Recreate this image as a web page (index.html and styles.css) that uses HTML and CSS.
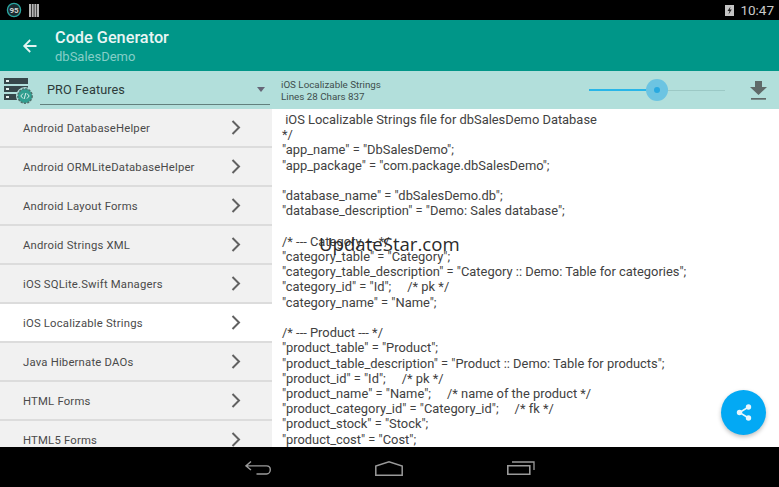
FILE: index.html
```html
<!DOCTYPE html>
<html lang="en">
<head>
<meta charset="utf-8">
<title>Code Generator</title>
<link rel="stylesheet" href="styles.css">
</head>
<body>
<div class="screen">
  <header class="status">
    <div class="status-left">
      <svg class="ic-badge" width="16" height="16" viewBox="0 0 16 16"><circle cx="8" cy="8" r="6.6" fill="#1b2b30" stroke="#2aa5a0" stroke-width="1.3"/><text x="8" y="11" text-anchor="middle" class="badge-text">95</text></svg>
      <svg width="10" height="13" viewBox="0 0 10 13"><path d="M0 0h2v13H0zM2.700 0h2v13h-2zM5.400 0h2v13h-2zM8 0h2v13H8z" fill="#b5b5b5"/></svg>
    </div>
    <div class="status-right">
      <svg width="9" height="12" viewBox="0 0 9 12"><path d="M0 1h9v11H0z" fill="#c4c4c4"/><path d="M5.500 2.500 2.500 7h2L3.500 10.500 6.800 5.600H4.800z" fill="#222"/></svg>
      <span class="clock">10:47</span>
    </div>
  </header>
  <div class="appbar">
    <svg class="back" width="16" height="16" viewBox="0 0 16 16"><path d="M14.500 8H2.500M8.200 2 2.200 8l6 6" fill="none" stroke="#e4f3f1" stroke-width="1.800"/></svg>
    <div class="titles">
      <div class="title">Code Generator</div>
      <div class="subtitle">dbSalesDemo</div>
    </div>
  </div>
  <div class="toolbar">
    <div class="tool-left">
      <svg class="db-icon" width="29" height="27" viewBox="0 0 29 27">
        <path d="M0 0h24v6H0zM0 8h24v6H0zM0 16h24v6H0z" fill="#37474a"/>
        <path d="M2 2h3v2H2zM2 10h3v2H2zM2 18h3v2H2z" fill="#e6f2f0"/>
        <circle cx="21" cy="18" r="9" fill="#b2dfdb"/>
        <circle cx="21" cy="18" r="7.200" fill="#2f9e8f" stroke="#50706c" stroke-width="1.400" stroke-dasharray="2.200 1.200"/>
        <path d="M19 15.500 16.800 18l2.200 2.500M23 15.500l2.200 2.500-2.200 2.500M21.800 15l-1.600 6" fill="none" stroke="#eaf6f4" stroke-width=".9"/>
      </svg>
      <div class="select">
        <span>PRO Features</span>
        <i class="caret"></i>
      </div>
    </div>
    <div class="tool-right">
      <div class="info">
        <div>iOS Localizable Strings</div>
        <div>Lines 28 Chars 837</div>
      </div>
      <div class="slider">
        <div class="slider-fill"></div>
        <div class="slider-rest"></div>
        <div class="slider-halo"><i class="slider-dot"></i></div>
      </div>
      <svg class="download" width="17" height="19" viewBox="0 0 17 19"><path d="M5 0h7v6h5l-8.500 8L0 6h5z" fill="#5f6a69"/><path d="M1 17h15v1.700H1z" fill="#5f6a69"/></svg>
    </div>
  </div>
  <main class="body">
    <nav class="list">
      <div class="row"><span>Android DatabaseHelper</span><svg class="chev" width="10" height="15" viewBox="0 0 10 15"><path d="M1.500 1 8 7.500 1.500 14" fill="none" stroke="#616161" stroke-width="2"/></svg></div>
      <div class="row"><span>Android ORMLiteDatabaseHelper</span><svg class="chev" width="10" height="15" viewBox="0 0 10 15"><path d="M1.500 1 8 7.500 1.500 14" fill="none" stroke="#616161" stroke-width="2"/></svg></div>
      <div class="row"><span>Android Layout Forms</span><svg class="chev" width="10" height="15" viewBox="0 0 10 15"><path d="M1.500 1 8 7.500 1.500 14" fill="none" stroke="#616161" stroke-width="2"/></svg></div>
      <div class="row"><span>Android Strings XML</span><svg class="chev" width="10" height="15" viewBox="0 0 10 15"><path d="M1.500 1 8 7.500 1.500 14" fill="none" stroke="#616161" stroke-width="2"/></svg></div>
      <div class="row"><span>iOS SQLite.Swift Managers</span><svg class="chev" width="10" height="15" viewBox="0 0 10 15"><path d="M1.500 1 8 7.500 1.500 14" fill="none" stroke="#616161" stroke-width="2"/></svg></div>
      <div class="row active"><span>iOS Localizable Strings</span><svg class="chev" width="10" height="15" viewBox="0 0 10 15"><path d="M1.500 1 8 7.500 1.500 14" fill="none" stroke="#616161" stroke-width="2"/></svg></div>
      <div class="row"><span>Java Hibernate DAOs</span><svg class="chev" width="10" height="15" viewBox="0 0 10 15"><path d="M1.500 1 8 7.500 1.500 14" fill="none" stroke="#616161" stroke-width="2"/></svg></div>
      <div class="row"><span>HTML Forms</span><svg class="chev" width="10" height="15" viewBox="0 0 10 15"><path d="M1.500 1 8 7.500 1.500 14" fill="none" stroke="#616161" stroke-width="2"/></svg></div>
      <div class="row"><span>HTML5 Forms</span><svg class="chev" width="10" height="15" viewBox="0 0 10 15"><path d="M1.500 1 8 7.500 1.500 14" fill="none" stroke="#616161" stroke-width="2"/></svg></div>
    </nav>
    <pre class="code"> iOS Localizable Strings file for dbSalesDemo Database
*/
"app_name" = "DbSalesDemo";
"app_package" = "com.package.dbSalesDemo";

"database_name" = "dbSalesDemo.db";
"database_description" = "Demo: Sales database";

/* --- Category --- */
"category_table" = "Category";
"category_table_description" = "Category :: Demo: Table for categories";
"category_id" = "Id";     /* pk */
"category_name" = "Name";

/* --- Product --- */
"product_table" = "Product";
"product_table_description" = "Product :: Demo: Table for products";
"product_id" = "Id";     /* pk */
"product_name" = "Name";     /* name of the product */
"product_category_id" = "Category_id";     /* fk */
"product_stock" = "Stock";
"product_cost" = "Cost";</pre>
  </main>
  <footer class="navbar">
    <svg width="26" height="14" viewBox="0 0 26 14"><path d="M6 .5.900 4.900 6 9M.900 4.900H21.500C24 4.900 25.300 6.700 25.300 8.700 25.300 10.900 23.800 13 21.500 13H11.500" fill="none" stroke="#9a9a9a" stroke-width="1.400"/></svg>
    <svg width="28" height="15" viewBox="0 0 28 15"><path d="M.800 14.200V5L14 .800 27.200 5v9.200z" fill="none" stroke="#9a9a9a" stroke-width="1.500"/></svg>
    <svg width="28" height="14" viewBox="0 0 28 14"><path d="M.800 4.800h22v8.400H.800z" fill="none" stroke="#9a9a9a" stroke-width="1.600"/><path d="M5 1h22v8" fill="none" stroke="#9a9a9a" stroke-width="1.300"/></svg>
  </footer>
  <div class="watermark">UpdateStar.com</div>
  <button class="fab" aria-label="Share">
    <svg width="16" height="17" viewBox="0 0 16 17"><path d="M12.500 3 3.500 8.500l9 5.500" fill="none" stroke="#e8f6fd" stroke-width="1.500"/><circle cx="12.500" cy="3" r="2.700" fill="#e8f6fd"/><circle cx="3.500" cy="8.500" r="2.700" fill="#e8f6fd"/><circle cx="12.500" cy="14" r="2.700" fill="#e8f6fd"/></svg>
  </button>
</div>
</body>
</html>
```
FILE: styles.css
```css
* { box-sizing: border-box; }
html, body { margin: 0; padding: 0; }
body { font-family: Roboto, "Liberation Sans", sans-serif; background: #000; }
.screen { position: relative; width: 779px; height: 487px; overflow: hidden; display: flex; flex-direction: column; background: #fff; }

.status { height: 20px; flex: none; background: #000; display: flex; justify-content: space-between; align-items: center; padding: 0 5px 0 6px; }
.status-left { display: flex; align-items: center; gap: 7px; }
.status-right { display: flex; align-items: center; gap: 6px; }
.badge-text { font: 700 8px Roboto, sans-serif; fill: #d5d5d5; }
.clock { color: #c9c9c9; font-size: 13.500px; line-height: 20px; }

.appbar { height: 51px; flex: none; background: #009688; display: flex; align-items: center; padding-left: 22px; }
.back { margin-right: 17px; }
.titles { display: flex; flex-direction: column; padding-top: 2px; }
.title { color: #e9f5f4; font-size: 16.300px; line-height: 20px; font-weight: 500; }
.subtitle { color: #85cec7; font-size: 13px; line-height: 16px; margin-top: 1px; }

.toolbar { height: 38px; flex: none; background: #b2dfdb; display: flex; }
.tool-left { width: 272px; flex: none; display: flex; align-items: flex-start; padding: 6px 0 0 4px; }
.db-icon { flex: none; margin-top: 1px; }
.select { width: 230px; height: 28px; margin-left: 7px; border-bottom: 1px solid #62807d; display: flex; justify-content: space-between; align-items: center; padding: 0 5px 2px 7px; color: #2d3b3a; font-size: 12.700px; letter-spacing: .1px; }
.caret { width: 0; height: 0; border: 4px solid transparent; border-top: 5px solid #667; border-bottom: 0; }
.tool-right { flex: 1; display: flex; align-items: center; padding: 0 12px 0 9px; }
.info { width: 308px; flex: none; font-size: 9.800px; line-height: 12px; color: #3e4e4d; padding-top: 2px; }
.slider { position: relative; width: 136px; height: 22px; display: flex; align-items: center; }
.slider-fill { width: 68px; height: 2px; background: #29b6e8; }
.slider-rest { flex: 1; height: 1px; background: #9cc9c5; }
.slider-halo { position: absolute; left: 57px; top: 0; width: 22px; height: 22px; border-radius: 50%; background: #6cc4e2; display: flex; align-items: center; justify-content: center; }
.slider-dot { width: 6px; height: 6px; border-radius: 50%; background: #29a9e0; }
.download { margin-left: auto; }

.body { flex: 1; min-height: 0; display: flex; overflow: hidden; }
.list { width: 272px; flex: none; background: #f1f1f1; }
.row { height: 39px; display: flex; align-items: center; justify-content: space-between; padding: 0 31px 0 23px; border-bottom: 2px solid #dcdcdc; color: #4a4a4a; font-size: 11.300px; letter-spacing: .2px; }
.row span { padding-top: 1px; }
.row.active { background: #fff; }
.code { flex: 1; margin: 0; padding: 3px 0 0 10px; font-family: Roboto, "Liberation Sans", sans-serif; font-size: 12.900px; line-height: 15.220px; color: #414141; background: #fff; overflow: hidden; }

.navbar { height: 40px; flex: none; background: #000; display: flex; align-items: center; justify-content: center; gap: 104px; padding: 2px 0 0 0; }

.watermark { position: absolute; left: 319px; top: 231px; font-family: "Open Sans", sans-serif; font-size: 18.600px; line-height: 26px; color: #2a2a2a; }
.fab { position: absolute; left: 721px; top: 390px; width: 45px; height: 45px; padding: 0; border: 0; border-radius: 50%; background: #03a9f4; box-shadow: 0 2px 4px rgba(0,0,0,.25); display: flex; align-items: center; justify-content: center; }
```
